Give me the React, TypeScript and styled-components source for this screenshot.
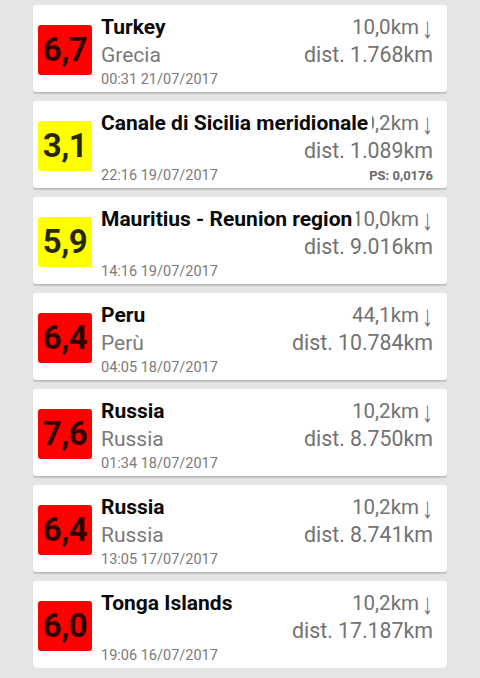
import styled, { createGlobalStyle } from 'styled-components';

const Global = createGlobalStyle`
  html, body { margin: 0; padding: 0; background: #e5e5e5; }
  body { font-family: Roboto, "Liberation Sans", sans-serif; }
`;

type Quake = {
  mag: string;
  level: 'red' | 'yellow';
  place: string;
  region?: string;
  time: string;
  depth: string;
  dist: string;
  ps?: string;
};

const QUAKES: Quake[] = [
  { mag: '6,7', level: 'red', place: 'Turkey', region: 'Grecia', time: '00:31 21/07/2017', depth: '10,0km', dist: 'dist. 1.768km' },
  { mag: '3,1', level: 'yellow', place: 'Canale di Sicilia meridionale', time: '22:16 19/07/2017', depth: '10,2km', dist: 'dist. 1.089km', ps: 'PS: 0,0176' },
  { mag: '5,9', level: 'yellow', place: 'Mauritius - Reunion region', time: '14:16 19/07/2017', depth: '10,0km', dist: 'dist. 9.016km' },
  { mag: '6,4', level: 'red', place: 'Peru', region: 'Perù', time: '04:05 18/07/2017', depth: '44,1km', dist: 'dist. 10.784km' },
  { mag: '7,6', level: 'red', place: 'Russia', region: 'Russia', time: '01:34 18/07/2017', depth: '10,2km', dist: 'dist. 8.750km' },
  { mag: '6,4', level: 'red', place: 'Russia', region: 'Russia', time: '13:05 17/07/2017', depth: '10,2km', dist: 'dist. 8.741km' },
  { mag: '6,0', level: 'red', place: 'Tonga Islands', time: '19:06 16/07/2017', depth: '10,2km', dist: 'dist. 17.187km' },
];

const LEVEL_COLORS = {
  red: { bg: '#ff0000', fg: 'rgba(0,0,0,0.82)' },
  yellow: { bg: '#ffff00', fg: 'rgba(0,0,0,0.85)' },
};

const List = styled.div`
  padding: 5px 0 0 33px;
  display: flex; flex-direction: column; gap: 9px;
`;

const Card = styled.div`
  width: 414px; height: 87px; box-sizing: border-box;
  background: #fff; border-radius: 3px;
  box-shadow: 0 2px 1px rgba(0,0,0,0.17);
  padding: 0 14px 0 5px;
  display: flex; align-items: center;
`;

const MagBox = styled.div<{ level: 'red' | 'yellow' }>`
  width: 54px; height: 50px; flex-shrink: 0;
  border-radius: 3px;
  background: ${p => LEVEL_COLORS[p.level].bg};
  color: ${p => LEVEL_COLORS[p.level].fg};
  font-size: 33px; font-weight: 700; letter-spacing: -0.5px;
  display: flex; align-items: center; justify-content: center;
  margin-top: 2px;
`;

const Body = styled.div`
  flex: 1; align-self: stretch; margin-left: 9px;
  padding-top: 9px;
  display: grid;
  grid-template-columns: 1fr auto;
  grid-template-rows: 26px 30px 20px;
  white-space: nowrap;
`;

const Place = styled.div`
  grid-column: 1 / -1; grid-row: 1;
  justify-self: start; z-index: 1;
  background: #fff; padding-right: 4px;
  font-size: 21px; line-height: 26px; font-weight: 700; color: #0a0a0a;
`;

const Depth = styled.div`
  grid-column: 1 / -1; grid-row: 1;
  justify-self: end;
  font-size: 20.5px; line-height: 26px; color: #727272;
`;

const Arrow = styled.span`
  display: inline-block;
  color: #727272;
  font-size: 22px; line-height: 20px; font-weight: 300;
  transform: scaleY(1.35); transform-origin: 50% 30%;
  margin-left: 3px;
`;

const Region = styled.div`
  grid-column: 1; grid-row: 2;
  font-size: 21px; line-height: 30px; color: #7a7a7a;
`;

const Dist = styled.div`
  grid-column: 2; grid-row: 2;
  justify-self: end;
  font-size: 21.3px; line-height: 30px; color: #727272;
`;

const Time = styled.div`
  grid-column: 1; grid-row: 3;
  font-size: 14.5px; line-height: 20px; color: #7a7a7a;
`;

const Ps = styled.div`
  grid-column: 2; grid-row: 3;
  justify-self: end;
  font-size: 13px; line-height: 20px; font-weight: 700; color: #6a6a6a;
`;

export default function App() {
  return (
    <>
      <Global />
      <List>
        {QUAKES.map((q, i) => (
          <Card key={i}>
            <MagBox level={q.level}>{q.mag}</MagBox>
            <Body>
              <Depth>{q.depth}<Arrow>↓</Arrow></Depth>
              <Place>{q.place}</Place>
              {q.region && <Region>{q.region}</Region>}
              <Dist>{q.dist}</Dist>
              <Time>{q.time}</Time>
              {q.ps && <Ps>{q.ps}</Ps>}
            </Body>
          </Card>
        ))}
      </List>
    </>
  );
}
